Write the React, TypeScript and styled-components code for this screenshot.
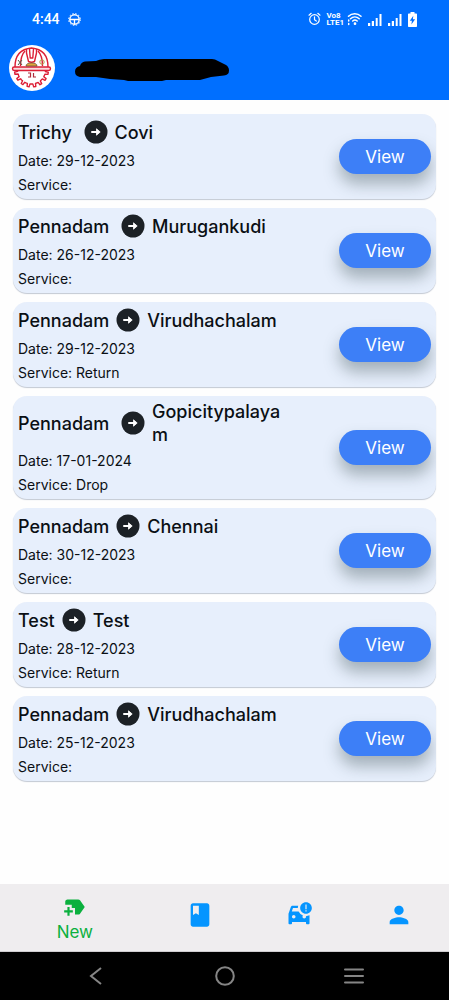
import React from "react";
import styled, { createGlobalStyle } from "styled-components";
import { MdBook, MdCarCrash, MdNewLabel, MdPerson } from "react-icons/md";

const GlobalStyle = createGlobalStyle`
  * { box-sizing: border-box; }
  body { margin: 0; background: #fefefe; font-family: Inter, "Open Sans", sans-serif; color: #0b0f14; }
  button { font: inherit; border: 0; padding: 0; background: none; cursor: pointer; }
`;

const Page = styled.div`
  min-height: 100vh;
  display: flex;
  flex-direction: column;
`;

const Header = styled.header`
  background: #006fff;
  padding: 9px 32px 9px 9px;
  color: #fff;
`;

const StatusBar = styled.div`
  height: 20px;
  display: flex;
  align-items: center;
  padding-left: 23px;
  gap: 8px;
`;

const Clock = styled.time`
  font: 500 14px/20px Roboto, sans-serif;
`;

const StatusIcons = styled.div`
  margin-left: auto;
  display: flex;
  align-items: center;
  gap: 6px;
`;

const Lte = styled.span`
  display: grid;
  justify-items: start;
  font: 700 8px/7px Roboto, sans-serif;
  margin-right: -3px;
`;

const Brand = styled.div`
  display: flex;
  align-items: center;
  gap: 19px;
  margin-top: 16px;
`;

const List = styled.ul`
  list-style: none;
  flex: 1;
  margin: 0;
  padding: 14px 13px;
  display: flex;
  flex-direction: column;
  gap: 9px;
`;

const Card = styled.li`
  display: flex;
  align-items: center;
  justify-content: space-between;
  padding: 4px 5px 2px;
  border-radius: 14px;
  background: #e7effc;
  box-shadow: 0 1px 1px #c3c9d3;
  overflow: hidden;
`;

const Route = styled.h2`
  display: flex;
  align-items: center;
  gap: 7px;
  min-height: 28px;
  margin: 0 0 3px;
  font-size: 18px;
  font-weight: 500;
  line-height: 23px;
`;

const Origin = styled.span`
  white-space: pre;
`;

const Destination = styled.span`
  max-width: 136px;
  overflow-wrap: anywhere;
`;

const Detail = styled.p`
  margin: 0;
  font-size: 14px;
  line-height: 24px;
`;

const ViewButton = styled.button`
  && {
    width: 92px;
    height: 35px;
    margin-bottom: 2px;
    flex: none;
    border-radius: 18px;
    background: #3d7ff7;
    color: #fff;
    font-size: 17px;
    box-shadow: 0 10px 16px rgba(60, 80, 85, 0.4);
  }
`;

const TabBar = styled.nav`
  display: flex;
  height: 68px;
  background: #efedef;
  border-bottom: 1px solid #cfcdd0;
`;

const Tab = styled.button<{ $active?: boolean }>`
  flex: ${(p) => (p.$active ? 3 : 2)} 1 0;
  display: flex;
  flex-direction: column;
  align-items: center;
  justify-content: center;
  && {
    color: ${(p) => (p.$active ? "#0bb03e" : "#0595ff")};
    padding: ${(p) => (p.$active ? "2px 0 0" : "0 0 5px")};
    font-size: 17px;
    line-height: 24px;
  }
`;

const SystemBar = styled.nav`
  display: flex;
  height: 48px;
  padding: 0 31px;
  background: #000;
`;

const SystemButton = styled.button`
  flex: 1;
  display: grid;
  place-items: center;
`;

const Alarm = () => (
  <svg width="13" height="14" viewBox="0 0 13 14" fill="none" stroke="#fff" strokeWidth="1.2" strokeLinecap="round">
    <circle cx="6.5" cy="7.5" r="4.8" />
    <path d="M6.5 4.8v3l1.8 1.3M1 3.2 3.2 1.3M12 3.2 9.8 1.3" />
  </svg>
);

const Wifi = () => (
  <svg width="15" height="14" viewBox="0 0 15 14" fill="none" stroke="#fff" strokeWidth="1.5" strokeLinecap="round">
    <path d="M1.5 4.3C5 .8 10.5 .8 14 4.3M3.500 6.700c2.500-2.400 6.200-2.400 8.700 0M5.700 9c1.300-1.200 3.200-1.200 4.500 0" />
    <circle cx="8" cy="11.7" r=".6" fill="#fff" />
    <path d="M1.700 8v1M1.700 11.500v1" />
  </svg>
);

const Signal = () => (
  <svg width="14" height="13" viewBox="0 0 14 13" fill="#fff">
    <path d="M0 10h2.200v3H0zM3.800 8H6v5H3.800zM7.700 5h2v8h-2zM11.500 1h2v12h-2z" />
  </svg>
);

const Battery = () => (
  <svg width="9" height="15" viewBox="0 0 9 15">
    <path fill="#fff" d="M2.500 0h4v1.500H8c.6 0 1 .4 1 1V14c0 .6-.4 1-1 1H1c-.6 0-1-.4-1-1V2.500c0-.6.4-1 1-1h1.500z" />
    <path fill="#006fff" d="M5.300 3.800 1.800 8.800h2.100l-.5 3.600 3.700-5.200H4.900z" />
  </svg>
);

const Wheel = () => (
  <svg width="13" height="13" viewBox="0 0 13 13" fill="none" stroke="#fff">
    <circle cx="6.500" cy="6.500" r="4.700" strokeWidth="1.400" />
    <circle cx="6.500" cy="6.500" r="5.900" strokeWidth="1" strokeDasharray="1.500 1.590" />
    <path strokeWidth="1.300" d="M2 6.500h9M6.500 6.500V11" />
  </svg>
);

// Lower half of a gear: alternating outer and inner arcs sampled every few degrees.
const gearPath = (() => {
  const teeth = 8;
  const points: string[] = [];
  for (let i = 0; i < teeth; i++) {
    const start = (i * 180) / teeth;
    for (const [offset, radius] of [[1, 14], [6, 14], [8, 17], [15, 17], [17, 14], [21, 14]]) {
      const a = ((start + offset) * Math.PI) / 180;
      points.push(`${(22.5 + radius * Math.cos(a)).toFixed(1)} ${(25 + radius * Math.sin(a)).toFixed(1)}`);
    }
  }
  return `M${points.join("L")}`;
})();

const Logo = () => (
  <svg width="46" height="46" viewBox="0 0 46 46" role="img" aria-label="Company logo">
    <circle cx="23" cy="23" r="23" fill="#fff" />
    <g fill="none" stroke="#dc1f36" strokeWidth="1.400" strokeLinejoin="round">
      <path d={gearPath} />
      <path d="M6 22C6 11 11 4 22.500 3 34 4 39 11 39 22" />
      <path d="M17.500 4v4l2 8.500q3 1.500 6 0l2-8.500V4M20.500 4l.7 9h2.600l.7-9M16 6c-3 3-4.500 8-4.500 15M29 6c3 3 4.500 8 4.500 15" />
      <rect x="3.500" y="22" width="38" height="3.500" rx="1.700" fill="#fbdde0" />
    </g>
    <path d="M17 21q0-3 5.500-3t5.500 3z" fill="#e0a63c" stroke="#5b4632" strokeWidth=".7" />
    <path d="m9 15 4 5m0-5-4 5" stroke="#55604c" strokeWidth="1" />
    <circle cx="33" cy="17" r="2.200" fill="none" stroke="#b59a48" />
    <path d="M19 28h2.500v4H19M24.500 28v4H27" fill="none" stroke="#b02a3a" strokeWidth="1.200" />
  </svg>
);

const Redaction = () => (
  <svg width="156" height="28" viewBox="0 0 156 28" aria-hidden="true">
    <path d="M6 12Q7 8 11 7.500L22 7Q25 5.500 30 5H138Q141 5 144 7L152 11Q155 13 155 16.500 155 21 150 21.500L137 23 126 26H92L88 27H54L50 26 36 25 22 23H6Q1 22 1 17.500 1 13 6 12z" />
  </svg>
);

const ArrowBadge = () => (
  <svg width="24" height="24" viewBox="0 0 24 24" role="img" aria-label="to">
    <circle cx="12" cy="12" r="11.500" fill="#1c2126" />
    <path d="M8 12h5" stroke="#fff" strokeWidth="2" strokeLinecap="round" />
    <path d="m12.500 8.800 3.700 3.200-3.700 3.200z" fill="#fff" stroke="#fff" strokeWidth=".8" strokeLinejoin="round" />
  </svg>
);

const trips = [
  { from: "Trichy ", to: "Covi", date: "29-12-2023", service: "" },
  { from: "Pennadam ", to: "Murugankudi", date: "26-12-2023", service: "" },
  { from: "Pennadam", to: "Virudhachalam", date: "29-12-2023", service: "Return" },
  { from: "Pennadam ", to: "Gopicitypalayam", date: "17-01-2024", service: "Drop" },
  { from: "Pennadam", to: "Chennai", date: "30-12-2023", service: "" },
  { from: "Test", to: "Test", date: "28-12-2023", service: "Return" },
  { from: "Pennadam", to: "Virudhachalam", date: "25-12-2023", service: "" },
];

export default function App() {
  return (
    <Page>
      <GlobalStyle />
      <Header>
        <StatusBar>
          <Clock>4:44</Clock>
          <Wheel />
          <StatusIcons>
            <Alarm />
            <Lte><span>Vo8</span><span>LTE1</span></Lte>
            <Wifi />
            <Signal />
            <Signal />
            <Battery />
          </StatusIcons>
        </StatusBar>
        <Brand>
          <Logo />
          <Redaction />
        </Brand>
      </Header>
      <List>
        {trips.map((trip, i) => (
          <Card key={i}>
            <div>
              <Route>
                <Origin>{trip.from}</Origin>
                <ArrowBadge />
                <Destination>{trip.to}</Destination>
              </Route>
              <Detail>Date: {trip.date}</Detail>
              <Detail>Service: {trip.service}</Detail>
            </div>
            <ViewButton type="button">View</ViewButton>
          </Card>
        ))}
      </List>
      <TabBar>
        <Tab type="button" $active><MdNewLabel size={26} />New</Tab>
        <Tab type="button" aria-label="Bookings"><MdBook size={28} /></Tab>
        <Tab type="button" aria-label="Vehicle alerts"><MdCarCrash size={28} /></Tab>
        <Tab type="button" aria-label="Profile"><MdPerson size={28} /></Tab>
      </TabBar>
      <SystemBar>
        <SystemButton type="button" aria-label="Back">
          <svg width="14" height="20" viewBox="0 0 14 20" fill="none" stroke="#858585" strokeWidth="2"><path d="M12 2 2 10l10 8" /></svg>
        </SystemButton>
        <SystemButton type="button" aria-label="Home">
          <svg width="20" height="20" viewBox="0 0 20 20" fill="none" stroke="#858585" strokeWidth="2"><circle cx="10" cy="10" r="8.800" /></svg>
        </SystemButton>
        <SystemButton type="button" aria-label="Recent apps">
          <svg width="20" height="16" viewBox="0 0 20 16" stroke="#858585" strokeWidth="2" strokeLinecap="round"><path d="M1 1.500h18M1 8h18M1 14.500h18" /></svg>
        </SystemButton>
      </SystemBar>
    </Page>
  );
}
